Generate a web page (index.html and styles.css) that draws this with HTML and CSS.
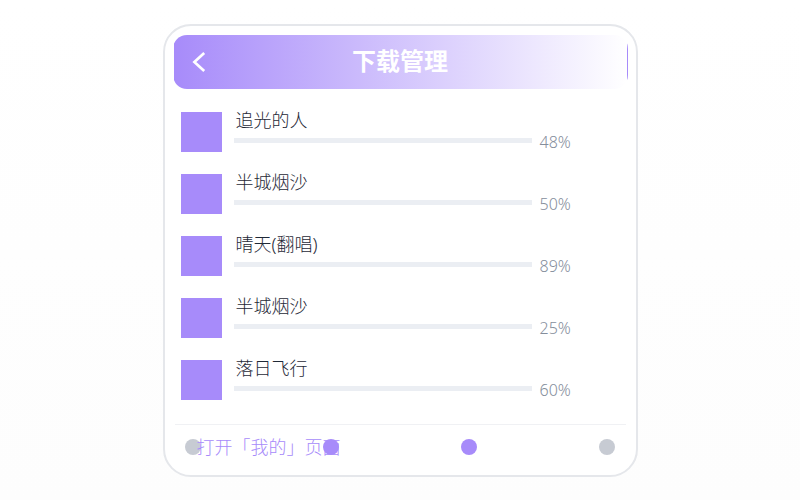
FILE: index.html
```html
<!DOCTYPE html>
<html lang="zh-CN">
<head>
<meta charset="utf-8">
<meta name="viewport" content="width=device-width, initial-scale=1">
<title>下载管理</title>
<link rel="stylesheet" href="styles.css">
</head>
<body>
<main class="card">
  <header class="header">
    <button class="back" type="button" aria-label="返回">
      <svg width="14" height="22" viewBox="0 0 14 22" fill="none" stroke="currentColor" stroke-width="2.7"><path d="M12.2 2 2.4 11 12.2 20"/></svg>
    </button>
    <h1 class="title">下载管理</h1>
  </header>
  <ul class="list">
    <li class="row">
      <span class="cover"></span>
      <div class="info"><label class="name" for="p1">追光的人</label><progress class="bar" id="p1" max="100" value="48"></progress></div>
      <span class="percent">48%</span>
    </li>
    <li class="row">
      <span class="cover"></span>
      <div class="info"><label class="name" for="p2">半城烟沙</label><progress class="bar" id="p2" max="100" value="50"></progress></div>
      <span class="percent">50%</span>
    </li>
    <li class="row">
      <span class="cover"></span>
      <div class="info"><label class="name" for="p3">晴天(翻唱)</label><progress class="bar" id="p3" max="100" value="89"></progress></div>
      <span class="percent">89%</span>
    </li>
    <li class="row">
      <span class="cover"></span>
      <div class="info"><label class="name" for="p4">半城烟沙</label><progress class="bar" id="p4" max="100" value="25"></progress></div>
      <span class="percent">25%</span>
    </li>
    <li class="row">
      <span class="cover"></span>
      <div class="info"><label class="name" for="p5">落日飞行</label><progress class="bar" id="p5" max="100" value="60"></progress></div>
      <span class="percent">60%</span>
    </li>
  </ul>
  <nav class="tabs">
    <span class="dot"></span>
    <a class="link" href="#mine">打开「我的」页面</a>
    <span class="dot dot-active"></span>
    <span class="dot dot-active"></span>
    <span class="dot"></span>
  </nav>
</main>
</body>
</html>
```
FILE: styles.css
```css
* {
  box-sizing: border-box;
}

body {
  margin: 0;
  padding: 24px;
  min-height: 100vh;
  background: linear-gradient(#ffffff, #fdfdfd);
  font-family: "Noto Sans", "Noto Sans CJK SC", sans-serif;
  font-weight: 300;
  color: #1f2937;
}

.card {
  max-width: 475px;
  margin: 0 auto;
  padding: 9px 8px;
  border: 2px solid #e5e7eb;
  border-radius: 28px;
  background: #ffffff;
}

.header {
  position: relative;
  display: flex;
  align-items: center;
  justify-content: center;
  height: 54px;
  border: 1px solid transparent;
  border-radius: 14px;
  background: linear-gradient(90deg, #a78bfa, #ffffff);
  color: #ffffff;
}

.back {
  position: absolute;
  left: 18px;
  display: flex;
  padding: 0;
  border: 0;
  background: none;
  color: inherit;
}

.title {
  margin: 0;
  padding-bottom: 2px;
  font-size: 24px;
  line-height: 32px;
  font-weight: 700;
}

.list {
  display: flex;
  flex-direction: column;
  gap: 22px;
  margin: 0;
  padding: 23px 8px 24px;
  list-style: none;
}

.row {
  display: grid;
  grid-template-columns: 41px 1fr 80px;
  height: 40px;
}

.cover {
  background: #a78bfa;
}

.info {
  display: flex;
  flex-direction: column;
  gap: 9px;
  padding: 0 8px 0 12px;
}

.name {
  padding-left: 2px;
  font-size: 18px;
  line-height: 17px;
}

.bar {
  appearance: none;
  display: block;
  width: 100%;
  height: 5px;
  border: 0;
  background: #ebeef3;
}

.bar::-webkit-progress-bar,
.bar::-webkit-progress-value {
  background: #ebeef3;
}

.percent {
  padding-top: 20px;
  font-size: 16px;
  line-height: 20px;
  color: #858e9c;
}

.tabs {
  position: relative;
  display: flex;
  align-items: center;
  justify-content: space-between;
  height: 42px;
  margin: 0 2px;
  padding: 2px 10px 0;
  border-top: 1px solid #f0f1f4;
}

.dot {
  width: 16px;
  height: 16px;
  border-radius: 50%;
  background: #c7cbd3;
}

.dot-active {
  position: relative;
  background: #a78bfa;
}

.link {
  position: absolute;
  left: 22px;
  font-size: 18px;
  line-height: 24px;
  white-space: nowrap;
  text-decoration: none;
  color: #a78bfa;
}
```
